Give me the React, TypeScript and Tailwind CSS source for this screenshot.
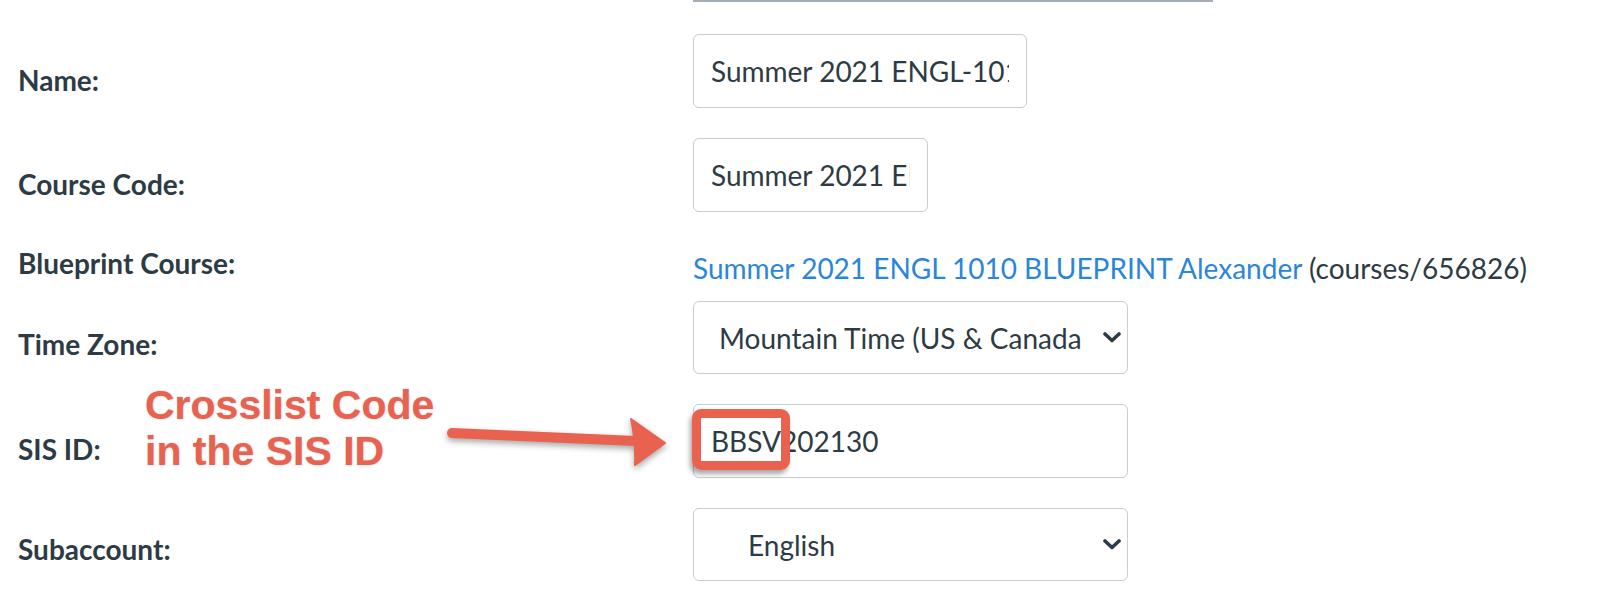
import React from 'react';

const Chevron = () => (
  <svg width="18" height="11" viewBox="0 0 18 11" className="shrink-0">
    <path d="M2 2 L9 8.5 L16 2" fill="none" stroke="#2d3b45" strokeWidth="3.6" strokeLinecap="round" strokeLinejoin="round" />
  </svg>
);

const TextBox = ({ value, width }: { value: string; width: string }) => (
  <div className={`${width} h-[74px] border border-[#c7cdd1] rounded-[6px] bg-white flex items-center pl-[17px] pr-[17px]`}>
    <div className="overflow-hidden whitespace-nowrap text-[28px] text-[#2d3b45]">{value}</div>
  </div>
);

const SelectBox = ({ value, indent }: { value: string; indent: string }) => (
  <div className={`w-[435px] h-[73px] border border-[#c7cdd1] rounded-[6px] bg-white flex items-center ${indent} pr-[6px]`}>
    <div className="flex-1 overflow-hidden whitespace-nowrap text-[28px] text-[#2d3b45] mr-[22px]">{value}</div>
    <Chevron />
  </div>
);

const Label = ({ text, offset }: { text: string; offset: string }) => (
  <div className={`w-[693px] shrink-0 pl-[18px] ${offset} text-[28px] leading-[30px] font-bold text-[#2d3b45]`}>
    {text}
  </div>
);

export default function App() {
  return (
    <div
      className="relative w-[1600px] h-[596px] overflow-hidden bg-white"
      style={{ fontFamily: 'Lato, "Open Sans", sans-serif' }}
    >
      <div className="ml-[693px] w-[520px] h-[2px] bg-[#a4adb3]" />

      {/* Name */}
      <div className="flex items-start mt-[32px]">
        <Label text="Name:" offset="mt-[31px]" />
        <TextBox value="Summer 2021 ENGL-1010 Alexander" width="w-[334px]" />
      </div>

      {/* Course Code */}
      <div className="flex items-start mt-[30px]">
        <Label text="Course Code:" offset="mt-[31px]" />
        <TextBox value="Summer 2021 ENGL-1010" width="w-[235px]" />
      </div>

      {/* Blueprint Course */}
      <div className="flex items-start mt-[30px] h-[59px]">
        <Label text="Blueprint Course:" offset="mt-[6px]" />
        <div className="mt-[11px] text-[28px] leading-[30px] whitespace-nowrap">
          <span className="text-[#2b86d9]">Summer 2021 ENGL 1010 BLUEPRINT Alexander</span>
          <span className="text-[#2d3b45]"> (courses/656826)</span>
        </div>
      </div>

      {/* Time Zone */}
      <div className="flex items-start">
        <Label text="Time Zone:" offset="mt-[28px]" />
        <SelectBox value="Mountain Time (US & Canada)" indent="pl-[25px]" />
      </div>

      {/* SIS ID */}
      <div className="flex items-start mt-[30px]">
        <Label text="SIS ID:" offset="mt-[30px]" />
        <div className="relative">
          <TextBox value="BBSV202130" width="w-[435px]" />
          <div className="absolute left-[-1px] top-[5px] w-[98px] h-[61px] border-[9px] border-[#e8624f] rounded-[9px] shadow-[-2px_4px_5px_rgba(0,0,0,0.35)]" />
        </div>
      </div>

      {/* Subaccount */}
      <div className="flex items-start mt-[30px]">
        <Label text="Subaccount:" offset="mt-[26px]" />
        <SelectBox value="English" indent="pl-[54px]" />
      </div>

      {/* annotation */}
      <div
        className="absolute left-[145px] top-[382px] text-[41px] leading-[46px] font-bold text-[#e8624f] [text-shadow:0_0_2px_rgba(0,0,0,0.25)]"
        style={{ fontFamily: '"Liberation Sans", Arial, sans-serif' }}
      >
        <div>Crosslist Code</div>
        <div>in the SIS ID</div>
      </div>
      <svg
        className="absolute left-[440px] top-[410px] [filter:drop-shadow(0_3px_3px_rgba(0,0,0,0.35))]"
        width="240"
        height="70"
        viewBox="440 410 240 70"
      >
        <path d="M452 433 L636 441" stroke="#e8624f" strokeWidth="10" strokeLinecap="round" fill="none" />
        <path d="M631 419 Q636 441 635 465 L665 443 Z" fill="#e8624f" stroke="#e8624f" strokeWidth="2" strokeLinejoin="round" />
      </svg>
    </div>
  );
}
